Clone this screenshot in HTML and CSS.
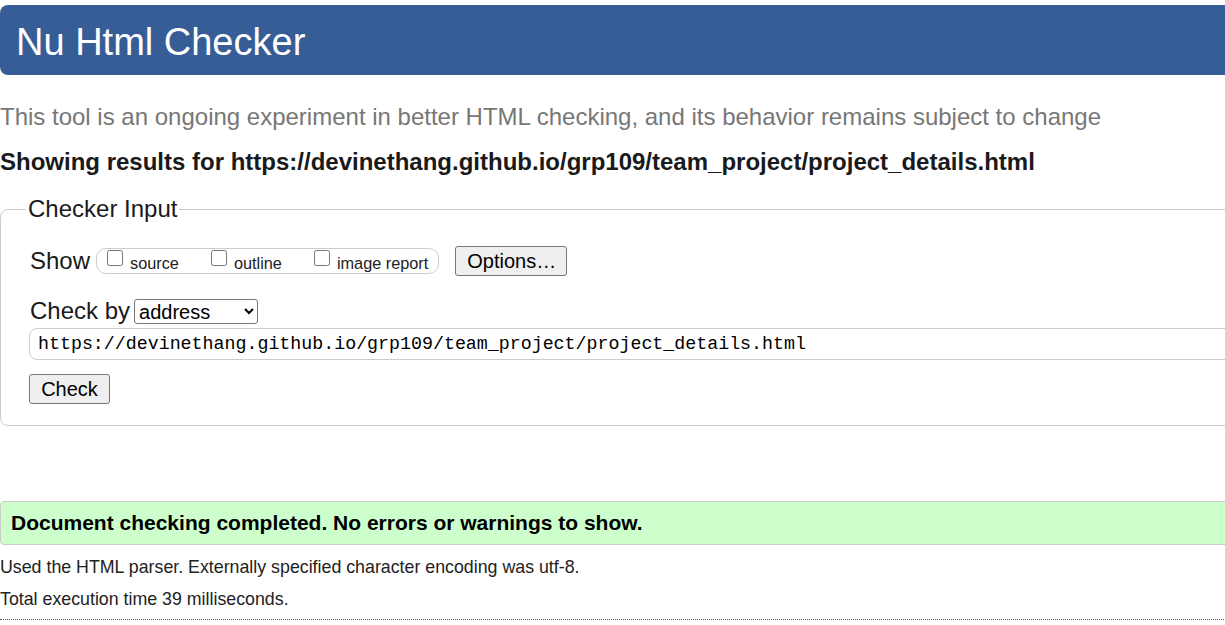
FILE: index.html
```html
<!DOCTYPE html>
<html lang="en">
<head>
<meta charset="utf-8">
<title>Nu Html Checker</title>
<link rel="stylesheet" href="styles.css">
</head>
<body>
<div class="page">
  <h1 class="banner">Nu Html Checker</h1>
  <p class="tagline">This tool is an ongoing experiment in better HTML checking, and its behavior remains subject to change</p>
  <p class="showing">Showing results for https://devinethang.github.io/grp109/team_project/project_details.html</p>
  <form class="checker">
    <fieldset class="fs">
      <legend class="legend">Checker Input</legend>
      <div class="row show-row">
        <span class="lbl">Show</span>
        <span class="opts">
          <label class="opt"><input type="checkbox" class="cb"> source</label>
          <label class="opt"><input type="checkbox" class="cb"> outline</label>
          <label class="opt"><input type="checkbox" class="cb"> image report</label>
        </span>
        <button type="button" class="btn opt-btn">Options…</button>
      </div>
      <div class="row by-row">
        <span class="lbl">Check by</span>
        <select class="sel"><option>address</option></select>
      </div>
      <input class="url" type="text" value="https://devinethang.github.io/grp109/team_project/project_details.html">
      <div class="row">
        <button type="button" class="btn check-btn">Check</button>
      </div>
    </fieldset>
  </form>
  <p class="success">Document checking completed. No errors or warnings to show.</p>
  <p class="info first">Used the HTML parser. Externally specified character encoding was utf-8.</p>
  <p class="info">Total execution time 39 milliseconds.</p>
  <hr class="dots">
</div>
</body>
</html>
```
FILE: styles.css
```css
html, body {
  margin: 0;
  padding: 0;
  overflow: hidden;
  background: #fff;
}
body {
  font-family: "Liberation Sans", Arial, sans-serif;
  color: #000;
}
.page {
  width: 1260px;
  padding-top: 5px;
}
.banner {
  margin: 0;
  height: 70px;
  box-sizing: border-box;
  padding: 4px 0 0 16px;
  background: #365d95;
  color: #fff;
  font-weight: normal;
  font-size: 38px;
  line-height: 66px;
  border-radius: 8px;
}
.tagline {
  margin: 28px 0 0 0;
  color: #777;
  font-size: 24px;
  line-height: 28px;
}
.showing {
  margin: 17px 0 0 0;
  font-weight: bold;
  font-size: 24px;
  line-height: 28px;
  color: #1a1a1a;
}
.checker {
  margin: 19px 0 0 0;
}
.fs {
  margin: 0;
  padding: 0 0 21px 29px;
  border: 1px solid #ccc;
  border-radius: 8px;
}
.legend {
  padding: 0 2px;
  margin-left: -4px;
  font-size: 24px;
  line-height: 28px;
  color: #1a1a1a;
}
.row {
  display: flex;
  align-items: center;
}
.lbl {
  font-size: 24px;
  color: #1a1a1a;
}
.show-row {
  margin-top: 23px;
  height: 30px;
}
.opts {
  display: flex;
  align-items: center;
  margin-left: 6px;
  height: 26px;
  box-sizing: border-box;
  padding: 0 10px 0 10px;
  border: 1px solid #ccc;
  border-radius: 10px;
  gap: 32px;
}
.opt {
  font-size: 16.3px;
  color: #222;
  display: flex;
  align-items: center;
  gap: 7px;
  padding-top: 4px;
}
.cb {
  margin: 0;
  width: 16px;
  height: 16px;
  position: relative;
  top: -5px;
}
.btn {
  font-family: "Liberation Sans", Arial, sans-serif;
  font-size: 20px;
  color: #000;
  background: #efefef;
  border: 1px solid #767676;
  border-radius: 3px;
  padding: 0 11px;
  height: 30px;
}
.opt-btn {
  margin-left: 16px;
  width: 112px;
}
.by-row {
  margin-top: 20px;
  height: 30px;
}
.sel {
  margin-left: 4px;
  font-family: "Liberation Sans", Arial, sans-serif;
  font-size: 20px;
  height: 25px;
  width: 124px;
  border: 1px solid #767676;
  border-radius: 3px;
  background: #fff;
  color: #000;
}
.url {
  display: block;
  margin: 2px 0 0 -1px;
  box-sizing: border-box;
  width: calc(100% + 40px);
  height: 32px;
  padding: 0 8px;
  font-family: "Liberation Mono", "DejaVu Sans Mono", monospace;
  font-size: 18.3px;
  color: #000;
  border: 1px solid #ccc;
  border-radius: 8px;
}
.check-btn {
  margin-top: 14px;
  margin-left: -1px;
  width: 81px;
  padding: 0;
}
.success {
  margin: 75px 0 0 0;
  height: 44px;
  box-sizing: border-box;
  padding-left: 10px;
  background: #ccffcc;
  border: 1px solid #ccc;
  border-radius: 4px;
  font-weight: bold;
  font-size: 21px;
  line-height: 42px;
}
.info {
  margin: 10px 0 0 0;
  font-size: 17.8px;
  line-height: 22px;
  color: #222;
}
.info.first {
  margin-top: 11px;
}
.dots {
  margin: 9px 0 0 0;
  border: 0;
  border-top: 1px dotted #555;
  height: 0;
}
```
